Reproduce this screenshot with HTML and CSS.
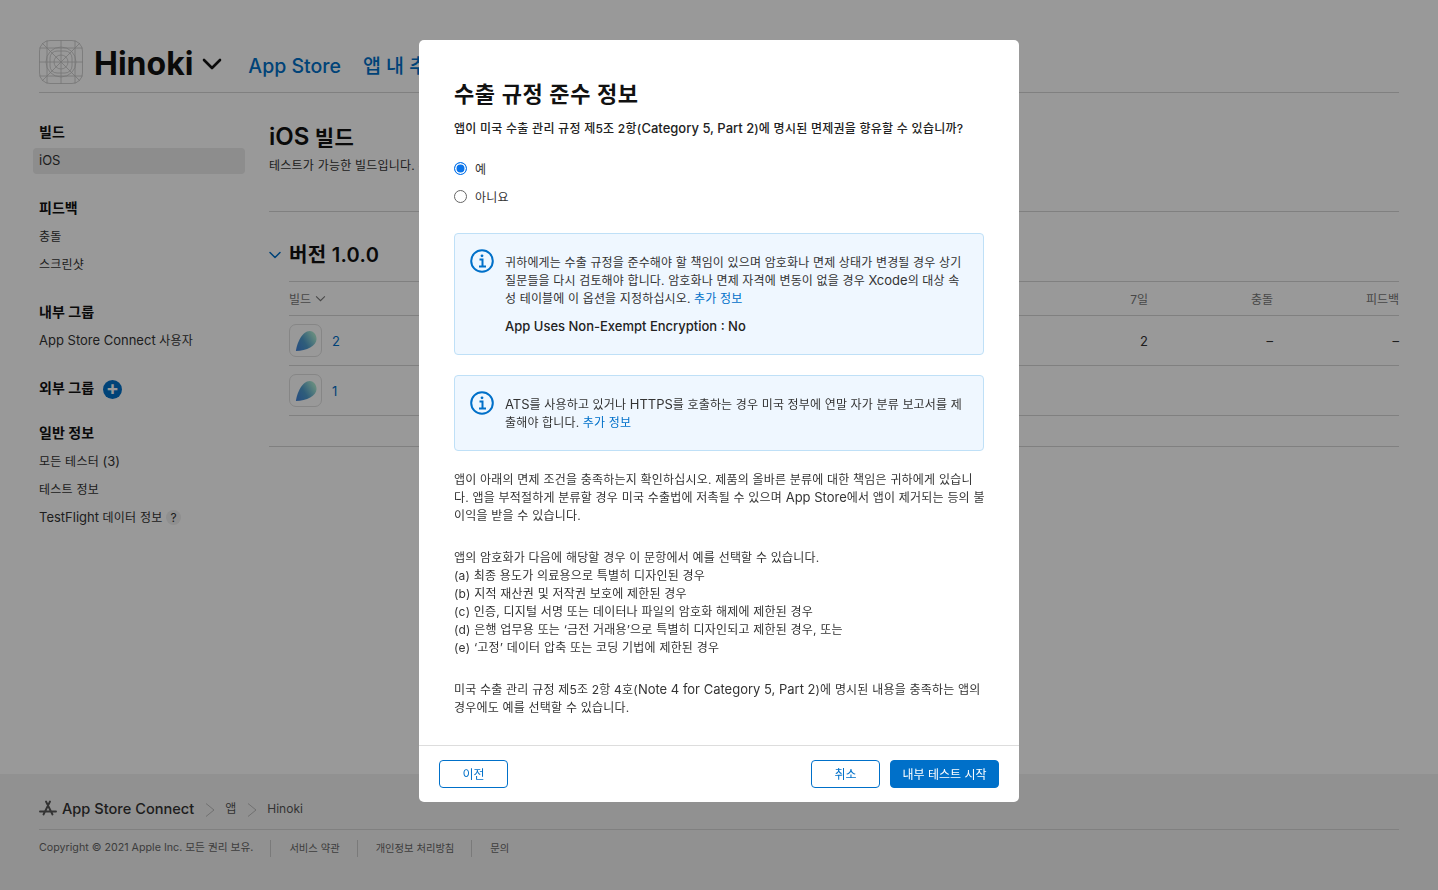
FILE: index.html
```html
<!DOCTYPE html>
<html lang="ko">
<head>
    <meta charset="UTF-8">
    <meta name="viewport" content="width=device-width, initial-scale=1.0">
    <title>Hinoki - TestFlight</title>
    <link rel="stylesheet" href="styles.css">
</head>
<body>
    <div class="page">
        <header class="top">
            <svg class="app-icon" viewBox="0 0 44 44" fill="none" stroke="#c4c4c4" stroke-width=".8">
                <defs><clipPath id="round"><rect width="44" height="44" rx="11"/></clipPath></defs>
                <g clip-path="url(#round)">
                    <path d="M0 0L44 44M44 0L0 44M22 0V44M0 22H44M8 0V44M36 0V44M0 8H44M0 36H44"/>
                    <circle cx="22" cy="22" r="15"/>
                    <circle cx="22" cy="22" r="7"/>
                    <rect x="11" y="11" width="22" height="22" rx="7"/>
                </g>
                <rect x=".5" y=".5" width="43" height="43" rx="10.5"/>
            </svg>
            <span class="app-name">Hinoki</span>
            <svg class="app-caret" viewBox="0 0 20 12" fill="none" stroke="#111" stroke-width="2.6" stroke-linecap="round" stroke-linejoin="round"><path d="M2 2l8 8 8-8"/></svg>
            <nav class="tabs">
                <a>App Store</a>
                <a>앱 내 추가 기능</a>
            </nav>
        </header>

        <div class="main">
            <aside class="side">
                <h4>빌드</h4>
                <a class="active"><span class="en">iOS</span></a>
                <h4>피드백</h4>
                <a>충돌</a>
                <a>스크린샷</a>
                <h4>내부 그룹</h4>
                <a><span class="en">App Store Connect</span> 사용자</a>
                <h4 class="with-add">외부 그룹 <span class="add">+</span></h4>
                <h4>일반 정보</h4>
                <a>모든 테스터 <span class="en">(3)</span></a>
                <a>테스트 정보</a>
                <a><span class="en">TestFlight</span> 데이터 정보 <span class="help">?</span></a>
            </aside>

            <section class="content">
                <h1><span class="en">iOS</span> 빌드</h1>
                <p class="lead">테스트가 가능한 빌드입니다. <a>추가 정보</a></p>
                <div class="version">
                    <h2><svg viewBox="0 0 12 8" fill="none" stroke="#0070c9" stroke-width="1.5" stroke-linecap="round" stroke-linejoin="round"><path d="M1 1.5l5 5 5-5"/></svg>버전 1.0.0</h2>
                    <div class="table">
                        <div class="row head">
                            <span class="build">빌드 <svg viewBox="0 0 12 8" fill="none" stroke="#777" stroke-width="1.2"><path d="M1 1.5l5 5 5-5"/></svg></span>
                            <span class="num">7일</span><span class="num">충돌</span><span class="num">피드백</span>
                        </div>
                        <div class="row">
                            <span class="build"><i class="thumb"><svg viewBox="0 0 24 24"><defs><linearGradient id="g1" x1="0" y1="1" x2="1" y2=".4"><stop offset="0" stop-color="#3f7fd8"/><stop offset=".5" stop-color="#4f9ccc"/><stop offset="1" stop-color="#a9e8d4"/></linearGradient></defs><path d="M1 23C2 14 8 1 16 1c5 0 7.500 5 7.500 9 0 7-11 12.500-22.500 13z" fill="url(#g1)"/></svg></i><a>2</a></span>
                            <span class="num">2</span><span class="num">–</span><span class="num">–</span>
                        </div>
                        <div class="row">
                            <span class="build"><i class="thumb"><svg viewBox="0 0 24 24"><path d="M1 23C2 14 8 1 16 1c5 0 7.500 5 7.500 9 0 7-11 12.500-22.500 13z" fill="url(#g1)"/></svg></i><a>1</a></span>
                        </div>
                    </div>
                </div>
            </section>
        </div>

        <footer class="foot">
            <div class="crumbs">
                <svg class="asc" viewBox="0 0 18 16" fill="none" stroke="#555" stroke-width="1.9" stroke-linecap="round"><path d="M7 1.500L13.500 14.500M11 1.500L4.500 14.500M1 11.500H17"/></svg>
                <b>App Store Connect</b>
                <svg class="sep" viewBox="0 0 9 14" fill="none" stroke="#bbb"><path d="M.5.5l8 6.500-8 6.500"/></svg>
                <span>앱</span>
                <svg class="sep" viewBox="0 0 9 14" fill="none" stroke="#bbb"><path d="M.5.5l8 6.500-8 6.500"/></svg>
                <span>Hinoki</span>
            </div>
            <div class="legal">
                <span>Copyright © 2021 Apple Inc. 모든 권리 보유.</span>
                <a>서비스 약관</a>
                <a>개인정보 처리방침</a>
                <a>문의</a>
            </div>
        </footer>
    </div>

    <div class="overlay">
        <div class="modal">
            <div class="modal-body">
                <h3>수출 규정 준수 정보</h3>
                <p class="question">앱이 미국 수출 관리 규정 제5조 2항(<span class="en">Category 5, Part 2</span>)에 명시된 면제권을 향유할 수 있습니까?</p>
                <div class="radios">
                    <label><i class="radio on"></i>예</label>
                    <label><i class="radio"></i>아니요</label>
                </div>
                <div class="notice">
                    <svg viewBox="0 0 24 24" fill="none" stroke="#0070c9"><circle cx="12" cy="12" r="10.800" stroke-width="2"/><path d="M9.500 10.500H12.500V17.500M9 17.500H16" stroke-width="2"/><circle cx="12" cy="6.800" r="1.400" fill="#0070c9" stroke="none"/></svg>
                    <div>
                        <p>귀하에게는 수출 규정을 준수해야 할 책임이 있으며 암호화나 면제 상태가 변경될 경우 상기 질문들을 다시 검토해야 합니다. 암호화나 면제 자격에 변동이 없을 경우 <span class="en">Xcode</span>의 대상 속성 테이블에 이 옵션을 지정하십시오. <a>추가 정보</a></p>
                        <p class="strong"><span class="en">App Uses Non-Exempt Encryption : No</span></p>
                    </div>
                </div>
                <div class="notice second">
                    <svg viewBox="0 0 24 24" fill="none" stroke="#0070c9"><circle cx="12" cy="12" r="10.800" stroke-width="2"/><path d="M9.500 10.500H12.500V17.500M9 17.500H16" stroke-width="2"/><circle cx="12" cy="6.800" r="1.400" fill="#0070c9" stroke="none"/></svg>
                    <div>
                        <p><span class="en">ATS</span>를 사용하고 있거나 <span class="en">HTTPS</span>를 호출하는 경우 미국 정부에 연말 자가 분류 보고서를 제출해야 합니다. <a>추가 정보</a></p>
                    </div>
                </div>
                <p class="text">앱이 아래의 면제 조건을 충족하는지 확인하십시오. 제품의 올바른 분류에 대한 책임은 귀하에게 있습니다. 앱을 부적절하게 분류할 경우 미국 수출법에 저촉될 수 있으며 <span class="en">App Store</span>에서 앱이 제거되는 등의 불이익을 받을 수 있습니다.</p>
                <p class="text">앱의 암호화가 다음에 해당할 경우 이 문항에서 예를 선택할 수 있습니다.<br>
                (a) 최종 용도가 의료용으로 특별히 디자인된 경우<br>
                (b) 지적 재산권 및 저작권 보호에 제한된 경우<br>
                (c) 인증, 디지털 서명 또는 데이터나 파일의 암호화 해제에 제한된 경우<br>
                (d) 은행 업무용 또는 ‘금전 거래용’으로 특별히 디자인되고 제한된 경우, 또는<br>
                (e) ‘고정’ 데이터 압축 또는 코딩 기법에 제한된 경우</p>
                <p class="text">미국 수출 관리 규정 제5조 2항 4호(<span class="en">Note 4 for Category 5, Part 2</span>)에 명시된 내용을 충족하는 앱의 경우에도 예를 선택할 수 있습니다.</p>
            </div>
            <div class="modal-foot">
                <button class="btn">이전</button>
                <span class="spacer"></span>
                <button class="btn">취소</button>
                <button class="btn primary">내부 테스트 시작</button>
            </div>
        </div>
    </div>
</body>
</html>
```

FILE: styles.css
```css
* {
    box-sizing: border-box;
}

html, body {
    margin: 0;
    height: 100%;
}

body {
    font-family: Inter, "Noto Sans CJK KR", sans-serif;
    font-size: 12px;
    letter-spacing: .22px;
    color: #333;
    overflow: hidden;
    background: #fff;
}

a {
    color: #0070c9;
}

/* latin runs are set a bit bigger than the hangul around them */
.en {
    font-size: 13px;
    letter-spacing: 0;
    line-height: 0;
}

.page {
    height: 890px;
    display: flex;
    flex-direction: column;
    padding-top: 40px;
}

/* top bar */
.top {
    margin: 0 39px;
    height: 53px;
    border-bottom: 1px solid #d6d6d6;
    display: flex;
    align-items: flex-start;
}

.app-icon {
    width: 44px;
    height: 44px;
    margin-right: 11px;
}

.app-name {
    font-size: 32px;
    line-height: 47px;
    font-weight: 700;
    letter-spacing: 0;
    color: #111;
}

.app-caret {
    width: 20px;
    height: 12px;
    margin: 18px 0 0 9px;
}

.tabs {
    display: flex;
    gap: 22px;
    margin-left: 26px;
    font-size: 19.500px;
    font-weight: 500;
    letter-spacing: 0;
    line-height: 53px;
    white-space: nowrap;
}

/* sidebar and content */
.main {
    flex: 1;
    display: flex;
    padding: 0 39px;
}

.side {
    width: 230px;
    padding-top: 25px;
    flex-shrink: 0;
}

.side h4 {
    margin: 0;
    font-size: 14px;
    letter-spacing: 0;
    line-height: 28px;
    font-weight: 600;
    color: #111;
}

.side a {
    display: block;
    color: #333;
    height: 28px;
    line-height: 30px;
}

.side a + h4 {
    margin-top: 20px;
}

.side a.active {
    margin: 2px 0 20px -6px;
    width: 212px;
    padding-left: 6px;
    height: 26px;
    line-height: 26px;
    background: #ebebeb;
    border-radius: 4px;
}

.side a.active + h4 {
    margin-top: 0;
}

.with-add {
    display: flex;
    align-items: center;
    gap: 9px;
}

.side h4.with-add {
    margin-bottom: 17px;
}

.add {
    width: 19px;
    height: 19px;
    margin-top: 2px;
    border-radius: 50%;
    background: #0070c9;
    color: #fff;
    font-size: 19px;
    line-height: 18px;
    text-align: center;
    font-weight: 700;
}

.help {
    display: inline-block;
    width: 15px;
    height: 15px;
    border-radius: 50%;
    background: #eee;
    text-align: center;
    font-size: 12px;
    line-height: 15px;
}

.content {
    flex: 1;
    padding-top: 30px;
}

.content h1 {
    margin: 0;
    font-size: 21px;
    line-height: 30px;
    font-weight: 600;
    color: #111;
}

.content h1 .en {
    font-size: 24px;
}

.lead {
    margin: 3px 0 0;
    line-height: 20px;
    padding-bottom: 35px;
    border-bottom: 1px solid #d6d6d6;
}

.version {
    padding-bottom: 30px;
    border-bottom: 1px solid #d6d6d6;
}

.version h2 {
    margin: 0;
    padding-top: 29px;
    height: 69px;
    display: flex;
    align-items: flex-start;
    font-size: 20px;
    letter-spacing: .3px;
    line-height: 28px;
    font-weight: 600;
    color: #111;
}

.version h2 svg {
    width: 12px;
    height: 8px;
    margin: 10px 8px 0 0;
}

.table {
    margin-left: 20px;
}

.row {
    display: flex;
    align-items: center;
    height: 50px;
    border-top: 1px solid #d6d6d6;
    font-size: 13px;
    letter-spacing: 0;
}

.row:last-child {
    border-bottom: 1px solid #d6d6d6;
    height: 51px;
}

.row.head {
    height: 34px;
    font-size: 12px;
    color: #777;
}

.build {
    flex: 1;
    display: flex;
    align-items: center;
}

.build svg {
    width: 11px;
    height: 7px;
    margin-left: 4px;
}

.num {
    width: 125px;
    text-align: right;
}

.num:last-child {
    width: 126px;
}

.thumb {
    width: 33px;
    height: 33px;
    margin-right: 10px;
    border: 1px solid #e0e0e0;
    border-radius: 7px;
    display: flex;
    align-items: center;
    justify-content: center;
}

.thumb svg {
    width: 22px;
    height: 22px;
    margin: 0;
}

/* footer */
.foot {
    height: 116px;
    padding: 0 39px;
    background: #f2f2f2;
    font-size: 12px;
    letter-spacing: 0;
    color: #555;
}

.crumbs {
    height: 56px;
    padding-top: 24px;
    border-bottom: 1px solid #d6d6d6;
    display: flex;
    align-items: flex-start;
    line-height: 22px;
}

.crumbs b {
    font-size: 14.600px;
    font-weight: 500;
    color: #333;
}

.asc {
    width: 18px;
    height: 16px;
    margin: 2px 5px 0 0;
}

.sep {
    width: 10px;
    height: 14px;
    margin: 5px 10.500px;
}

.legal {
    display: flex;
    padding-top: 10px;
    font-size: 10.700px;
    line-height: 16px;
}

.legal > * {
    color: #666;
    padding-right: 17px;
    margin-right: 18px;
    border-right: 1px solid #ccc;
    height: 17px;
}

.legal a {
    font-size: 10.300px;
}

.legal > *:last-child {
    border-right: 0;
}

/* modal */
.overlay {
    position: fixed;
    inset: 0;
    background: rgba(0, 0, 0, .4);
    display: flex;
    justify-content: center;
    padding-top: 40px;
}

.modal {
    width: 600px;
    height: 762px;
    background: #fff;
    border-radius: 5px;
    display: flex;
    flex-direction: column;
}

.modal-body {
    flex: 1;
    padding: 38px 35px 0;
    word-break: break-all;
}

.modal-body h3 {
    margin: 0;
    font-size: 22px;
    letter-spacing: .55px;
    line-height: 32px;
    font-weight: 600;
    color: #111;
}

.question {
    margin: 10px 0 0;
    font-weight: 500;
    letter-spacing: .25px;
    line-height: 18px;
    color: #222;
}

.radios {
    margin-top: 16px;
    margin-bottom: 23px;
}

.radios label {
    display: flex;
    align-items: center;
    gap: 8px;
    height: 28px;
}

.radio {
    width: 13px;
    height: 13px;
    border-radius: 50%;
    border: 1px solid #666;
    background: #fff;
}

.radio.on {
    border: 1.500px solid #0a74ea;
    box-shadow: inset 0 0 0 1.500px #fff;
    background: #0a74ea;
}

.notice {
    display: flex;
    gap: 11px;
    padding: 17px 18px 18px 15px;
    background: #eff7ff;
    border: 1px solid #bfe0f7;
    border-radius: 4px;
    letter-spacing: .15px;
    line-height: 18px;
}

.notice.second {
    margin-top: 20px;
}

.notice svg {
    width: 24px;
    height: 24px;
    margin-top: -2px;
    flex-shrink: 0;
}

.notice p {
    margin: 3px 0 0;
}

.notice .strong {
    margin: 10px 0 0;
    font-weight: 500;
    color: #222;
}

.text {
    margin: 20px -1px 0 0;
    letter-spacing: .2px;
    line-height: 18px;
}

.text + .text {
    margin-top: 24px;
}

.modal-foot {
    height: 57px;
    border-top: 1px solid #ddd;
    padding: 14px 20px 0;
    display: flex;
    align-items: flex-start;
    gap: 10px;
}

.spacer {
    flex: 1;
}

.btn {
    width: 69px;
    height: 28px;
    padding: 0 0 2px;
    border: 1px solid #0070c9;
    border-radius: 4px;
    background: #fff;
    color: #0070c9;
    font-family: inherit;
    font-size: 12px;
}

.btn.primary {
    width: 109px;
    background: #0070c9;
    color: #fff;
}
```
